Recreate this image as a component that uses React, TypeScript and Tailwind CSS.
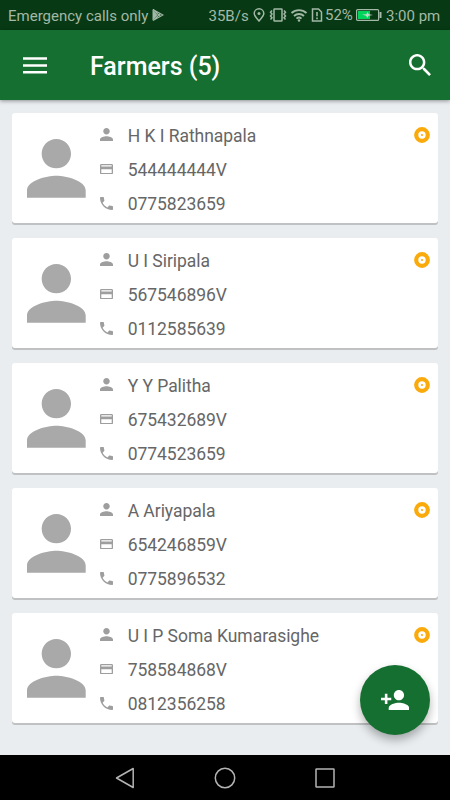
type Farmer = {
  name: string;
  nic: string;
  phone: string;
};

const farmers: Farmer[] = [
  { name: 'H K I Rathnapala', nic: '544444444V', phone: '0775823659' },
  { name: 'U I Siripala', nic: '567546896V', phone: '0112585639' },
  { name: 'Y Y Palitha', nic: '675432689V', phone: '0774523659' },
  { name: 'A Ariyapala', nic: '654246859V', phone: '0775896532' },
  { name: 'U I P Soma Kumarasighe', nic: '758584868V', phone: '0812356258' },
];

function PersonIcon({ className }: { className: string }) {
  return (
    <svg viewBox="4 4 16 16" fill="currentColor" className={className}>
      <path d="M12 12c2.21 0 4-1.79 4-4s-1.79-4-4-4-4 1.79-4 4 1.79 4 4 4zm0 2c-2.67 0-8 1.34-8 4v2h16v-2c0-2.66-5.33-4-8-4z" />
    </svg>
  );
}

function CardIcon() {
  return (
    <svg viewBox="2 4 20 16" fill="currentColor" className="h-[10.4px] w-[13px]">
      <path d="M20 4H4c-1.11 0-1.99.89-1.99 2L2 18c0 1.11.89 2 2 2h16c1.11 0 2-.89 2-2V6c0-1.11-.89-2-2-2zm0 14H4v-6h16v6zm0-10H4V6h16v2z" />
    </svg>
  );
}

function PhoneIcon() {
  return (
    <svg viewBox="3 3 18 18" fill="currentColor" className="h-[13px] w-[13px]">
      <path d="M6.62 10.79c1.44 2.83 3.76 5.14 6.59 6.59l2.2-2.2c.27-.27.67-.36 1.02-.24 1.12.37 2.33.57 3.57.57.55 0 1 .45 1 1V20c0 .55-.45 1-1 1-9.39 0-17-7.61-17-17 0-.55.45-1 1-1h3.5c.55 0 1 .45 1 1 0 1.25.2 2.45.57 3.57.11.35.03.74-.25 1.02l-2.2 2.2z" />
    </svg>
  );
}

function StatusBar() {
  return (
    <div className="flex h-[30px] items-center bg-[#073a14] pl-2 pr-[10px] text-[15px] leading-[30px] whitespace-nowrap text-[#a3b8a6]">
      <span className="w-[141px] pt-[2px]">Emergency calls only</span>
      <svg viewBox="0 0 12 12" className="ml-[3px] h-3 w-3">
        <path d="M0.5 0.5v11l5-5.5z" fill="#a3b8a6" />
        <path d="M1 .5l10 5.5-10 5.5M1 .5l7.5 7M1 11.5l7.5-7" fill="none" stroke="#a3b8a6" strokeWidth="1.1" />
      </svg>
      <span className="ml-auto w-[40px] pt-[2px]">35B/s</span>
      <svg viewBox="0 0 12 14" fill="none" stroke="currentColor" strokeWidth="1.5" className="ml-[4.5px] h-[14px] w-3">
        <path d="M6 13C3.5 10 1.2 8 1.2 5.6a4.8 4.8 0 0 1 9.6 0C10.8 8 8.5 10 6 13z" />
        <circle cx="6" cy="5.6" r="1.5" fill="currentColor" stroke="none" />
      </svg>
      <svg viewBox="0 0 18 14" fill="none" stroke="currentColor" strokeWidth="1.5" className="ml-[4px] h-[14px] w-[18px]">
        <rect x="5" y="1" width="8" height="12" rx="0.5" />
        <path d="M3 2.5l-1.5 1.8 1.5 1.8-1.5 1.8 1.5 1.8-1.5 1.8M15 2.5l1.5 1.8-1.5 1.8 1.5 1.8-1.5 1.8 1.5 1.8" />
      </svg>
      <svg viewBox="0 0 18 14" fill="none" stroke="currentColor" strokeWidth="1.8" className="ml-[3px] h-[14px] w-[18px]">
        <path d="M1.5 5a11 11 0 0 1 15 0M4 8a7.3 7.3 0 0 1 10 0M6.5 10.6a3.7 3.7 0 0 1 5 0" />
        <circle cx="9" cy="12.5" r="1.2" fill="currentColor" stroke="none" />
      </svg>
      <svg viewBox="0 0 12 14" fill="none" stroke="currentColor" strokeWidth="1.5" className="ml-[3px] h-[14px] w-3">
        <path d="M1.5 1h6L10.5 4v9h-9z" />
        <path d="M6 4v4.2M6 9.5v1.7" strokeWidth="1.6" />
      </svg>
      <span className="ml-[2px] w-[27px]">52%</span>
      <svg viewBox="0 0 26 12" className="ml-[4px] h-3 w-[26px]">
        <rect x="0.6" y="0.6" width="22" height="10.8" rx="1" fill="none" stroke="#a3b8a6" strokeWidth="1.2" />
        <rect x="2" y="2" width="12" height="8" fill="#00d45a" />
        <path d="M6 5.5l4.5-.3.7-2.2 1.8 2.2 4 .8-4.5.8-1 2.2-1.5-2.2z" fill="#c5d8c8" />
        <rect x="23.5" y="3" width="2" height="6" fill="#a3b8a6" />
      </svg>
      <span className="ml-[4px] w-[54px] pt-[2px]">3:00 pm</span>
    </div>
  );
}

function AppBar() {
  return (
    <header className="relative flex h-[70px] items-center bg-[#156f30] pl-[23px] pr-[19px] text-white shadow-[0_1px_4px_rgba(0,0,0,0.4)]">
      <svg viewBox="0 0 24 17" fill="currentColor" className="h-[17px] w-6">
        <path d="M0 0.3h24v2.5H0zM0 7.2h24v2.5H0zM0 14.1h24v2.5H0z" />
      </svg>
      <h1 className="ml-[43px] pt-[4px] text-[25px] font-medium whitespace-nowrap">Farmers (5)</h1>
      <svg viewBox="3 3 17.49 17.49" fill="currentColor" className="ml-auto h-[22px] w-[22px]">
        <path d="M15.5 14h-.79l-.28-.27C15.41 12.59 16 11.11 16 9.5 16 5.91 13.09 3 9.5 3S3 5.91 3 9.5 5.91 16 9.5 16c1.61 0 3.09-.59 4.23-1.57l.27.28v.79l5 4.99L20.49 19l-4.99-5zm-6 0C7.01 14 5 11.99 5 9.5S7.01 5 9.5 5 14 7.01 14 9.5 11.99 14 9.5 14z" />
      </svg>
    </header>
  );
}

function FarmerCard({ farmer }: { farmer: Farmer }) {
  return (
    <li className="flex h-[110px] rounded-[3px] bg-white pl-[15px] pr-2 shadow-[0_2px_0_#bfc1c2]">
      <PersonIcon className="mt-[26.5px] h-[58.7px] w-[58.7px] text-[#a9a9a9]" />
      <div className="ml-[14px] flex flex-col pt-[6px] text-[17.5px] tracking-[-0.04px] whitespace-nowrap text-[#666]">
        <div className="flex h-[34px] items-center">
          <PersonIcon className="mb-[2px] h-[13px] w-[13px] text-[#9e9e9e]" />
          <span className="ml-[15px] pt-[2px]">{farmer.name}</span>
        </div>
        <div className="flex h-[34px] items-center">
          <span className="mb-px text-[#9e9e9e]">
            <CardIcon />
          </span>
          <span className="ml-[15px] pt-[2px]">{farmer.nic}</span>
        </div>
        <div className="flex h-[34px] items-center">
          <span className="mb-px text-[#9e9e9e]">
            <PhoneIcon />
          </span>
          <span className="ml-[15px] pt-[2px]">{farmer.phone}</span>
        </div>
      </div>
      <svg viewBox="0 0 16 16" className="mt-[14px] ml-auto h-4 w-4">
        <circle cx="8" cy="8" r="5.8" fill="white" stroke="#fbaa0c" strokeWidth="4.2" />
        <circle cx="8" cy="8" r="1.1" fill="#fbaa0c" />
      </svg>
    </li>
  );
}

function NavBar() {
  return (
    <nav className="flex h-[45px] items-center bg-black pl-[115px]">
      <svg viewBox="0 0 20 22" fill="none" stroke="#b4b4b4" strokeWidth="1.5" strokeLinejoin="round" className="h-[22px] w-5">
        <path d="M18.2 1.5v19L1.5 11z" />
      </svg>
      <svg viewBox="0 0 22 22" fill="none" stroke="#b4b4b4" strokeWidth="1.5" className="ml-[79px] h-[22px] w-[22px]">
        <circle cx="11" cy="11" r="9.7" />
      </svg>
      <svg viewBox="0 0 20 20" fill="none" stroke="#b4b4b4" strokeWidth="1.5" className="ml-[79px] h-5 w-5">
        <rect x="1" y="1" width="18" height="18" rx="0.5" />
      </svg>
    </nav>
  );
}

export default function App() {
  return (
    <div className="relative flex h-[800px] w-[450px] flex-col overflow-hidden bg-[#e9edf0] font-[Roboto,sans-serif]">
      <StatusBar />
      <AppBar />

      <ul className="flex flex-1 flex-col gap-[15px] px-3 pt-[12.5px]">
        {farmers.map((farmer) => (
          <FarmerCard key={farmer.nic} farmer={farmer} />
        ))}
      </ul>

      <NavBar />

      <button
        aria-label="Add farmer"
        className="absolute right-5 bottom-[65px] flex h-[70px] w-[70px] items-center justify-center rounded-full bg-[#156f30] text-white shadow-[0_5px_10px_rgba(0,0,0,0.3)]"
      >
        <svg viewBox="1 4 22 16" fill="currentColor" className="h-[20.5px] w-[28.2px]">
          <path d="M15 12c2.21 0 4-1.79 4-4s-1.79-4-4-4-4 1.79-4 4 1.79 4 4 4zm-9-2V7H4v3H1v2h3v3h2v-3h3v-2H6zm9 4c-2.67 0-8 1.34-8 4v2h16v-2c0-2.66-5.33-4-8-4z" />
        </svg>
      </button>
    </div>
  );
}
